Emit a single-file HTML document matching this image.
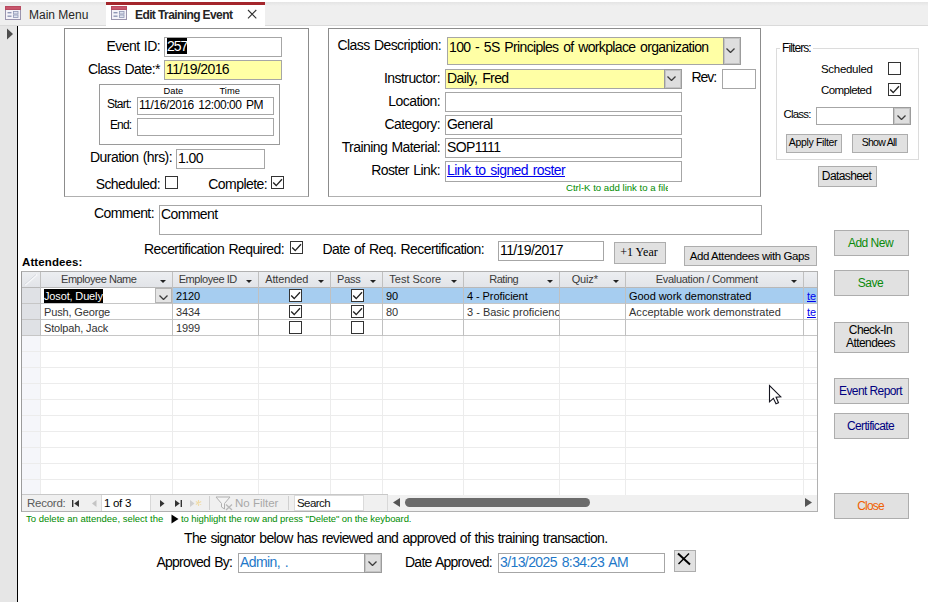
<!DOCTYPE html>
<html><head><meta charset="utf-8"><title>Edit Training Event</title>
<style>
html,body{margin:0;padding:0;}
body{width:928px;height:602px;position:relative;overflow:hidden;background:#fff;font-family:"Liberation Sans",Arial,sans-serif;font-size:13px;color:#000;}
div,span,a{box-sizing:border-box;}
.a{position:absolute;white-space:nowrap;}
.lbl{position:absolute;white-space:nowrap;text-align:right;font-size:14px;letter-spacing:-0.57px;word-spacing:1px;line-height:16px;height:16px;}
.inp{position:absolute;border:1px solid #a6a6a6;background:#fff;font-size:14px;letter-spacing:-0.6px;word-spacing:1.5px;line-height:17px;padding-left:1px;white-space:nowrap;overflow:hidden;}
.y{background:#ffffa5;}
.box{position:absolute;border:1px solid #8c8c8c;}
.btn{position:absolute;background:#e1e1e1;border:1px solid #adadad;text-align:center;white-space:nowrap;padding-right:2px;}
.cb{position:absolute;width:13px;height:13px;border:1px solid #333;background:#fff;}
.cb svg{position:absolute;left:0;top:0;}
.dd{position:absolute;background:#e1e1e1;border:1px solid #adadad;}
.dd svg{position:absolute;left:50%;top:50%;margin:-2px 0 0 -4px;}
.dd.k svg{margin:-3px 0 0 -6px;}
.dd.f svg{margin:-1px 0 0 -5px;}
.dd.h svg{margin:-2px 0 0 -5.5px;}
.hd{font-size:11px;letter-spacing:-0.45px;line-height:15px;height:15px;text-align:center;color:#3a3a3a;}
.ct{font-size:11px;letter-spacing:-0.15px;line-height:14px;}
.lk{color:#0000ee;text-decoration:underline;}
.nv{font-size:11.5px;line-height:14px;}
.cb.g{width:13px;height:13px;}
</style></head><body>

<!-- tab bar -->
<div class="a" id="tabbar" style="left:0;top:2px;width:928px;height:24px;background:linear-gradient(#e4e4e4,#efefef 4px,#efefef);border-bottom:1px solid #dadada;"></div>
<div class="a" id="tab2" style="left:106px;top:2px;width:159px;height:24px;background:#fff;border-top:3px solid #a4262c;"></div>
<svg class="a" style="left:5px;top:6px" width="17" height="15" viewBox="0 0 17 15"><rect x="0.5" y="0.5" width="15" height="13" fill="#f4f2f8" stroke="#9a94ad"/><rect x="0.5" y="0.5" width="15" height="3" fill="#c8566c" stroke="#b84a60"/><rect x="2.5" y="6" width="4" height="1.4" fill="#8f97b5"/><rect x="2.5" y="9.5" width="4" height="1.4" fill="#8f97b5"/><rect x="8.5" y="5.5" width="4.5" height="2.5" fill="#dfe3ee" stroke="#8f97b5" stroke-width=".8"/><rect x="8.5" y="9" width="4.5" height="2.5" fill="#dfe3ee" stroke="#8f97b5" stroke-width=".8"/></svg>
<div class="a" style="left:29px;top:6.5px;font-size:12px;line-height:16px;color:#262626;">Main Menu</div>
<svg class="a" style="left:111px;top:6px" width="17" height="15" viewBox="0 0 17 15"><rect x="0.5" y="0.5" width="15" height="13" fill="#f4f2f8" stroke="#9a94ad"/><rect x="0.5" y="0.5" width="15" height="3" fill="#c8566c" stroke="#b84a60"/><rect x="2.5" y="6" width="4" height="1.4" fill="#8f97b5"/><rect x="2.5" y="9.5" width="4" height="1.4" fill="#8f97b5"/><rect x="8.5" y="5.5" width="4.5" height="2.5" fill="#dfe3ee" stroke="#8f97b5" stroke-width=".8"/><rect x="8.5" y="9" width="4.5" height="2.5" fill="#dfe3ee" stroke="#8f97b5" stroke-width=".8"/></svg>
<div class="a" style="left:135px;top:6.5px;font-size:12px;line-height:16px;font-weight:bold;letter-spacing:-0.6px;color:#262626;">Edit Training Event</div>
<svg class="a" style="left:246px;top:8px" width="12" height="12" viewBox="0 0 12 12"><path d="M2 2 L10.3 10.3 M10.3 2 L2 10.3" stroke="#333" stroke-width="1.1" fill="none"/></svg>

<!-- record selector strip -->
<div class="a" style="left:0;top:26px;width:17px;height:576px;background:#e6e6e6;"></div>
<div class="a" style="left:17px;top:26px;width:1px;height:576px;background:#000;"></div>
<svg class="a" style="left:6px;top:28px" width="8" height="12" viewBox="0 0 8 12"><path d="M1 0.5 L7 6 L1 11.5 Z" fill="#4d4d4d"/></svg>

<!-- left panel -->
<div class="box" style="left:64px;top:28px;width:245px;height:169px;border-bottom-color:#b0b0b0;"></div>
<div class="lbl" style="left:70px;width:90px;top:38px;">Event ID:</div>
<div class="inp" style="left:164px;top:37px;width:118px;height:20px;"><span style="background:#000;color:#fff;margin-left:1px;letter-spacing:-1px;">257</span></div>
<div class="lbl" style="left:70px;width:90px;top:61px;">Class Date:*</div>
<div class="inp y" style="left:164px;top:60px;width:118px;height:20px;">11/19/2016</div>
<div class="box" style="left:99px;top:84px;width:181px;height:61px;border-color:#9a9a9a;"></div>
<div class="a" style="left:163.5px;top:86px;font-size:9.33px;line-height:11px;">Date</div>
<div class="a" style="left:219.5px;top:86px;font-size:9.33px;line-height:11px;">Time</div>
<div class="a" style="left:107px;top:97px;font-size:12px;letter-spacing:-0.75px;line-height:14px;">Start:</div>
<div class="inp" style="left:137px;top:97px;width:137px;height:18px;font-size:12px;letter-spacing:-0.43px;line-height:15px;">11/16/2016 12:00:00 PM</div>
<div class="a" style="left:110px;top:118px;font-size:12px;letter-spacing:-0.9px;line-height:14px;">End:</div>
<div class="inp" style="left:137px;top:118px;width:137px;height:18px;"></div>
<div class="lbl" style="left:70px;width:102px;top:149px;">Duration (hrs):</div>
<div class="inp" style="left:176px;top:149px;width:89px;height:20px;">1.00</div>
<div class="lbl" style="left:70px;width:90px;top:176px;">Scheduled:</div>
<div class="cb" style="left:165px;top:176px;"></div>
<div class="lbl" style="left:180px;width:87px;top:176px;">Complete:</div>
<div class="cb" style="left:271px;top:176px;"><svg width="11" height="11" viewBox="0 0 11 11"><path d="M1.2 5.6 L4.2 8.6 L10 2.3" stroke="#222" stroke-width="1.35" fill="none"/></svg></div>

<!-- right panel -->
<div class="box" style="left:328px;top:28px;width:433px;height:169px;border-bottom-color:#b0b0b0;"></div>
<div class="lbl" style="left:330px;width:111px;top:37px;">Class Description:</div>
<div class="inp y" style="left:447px;top:37px;width:277px;height:28px;line-height:18px;letter-spacing:-0.66px;">100 - 5S Principles of workplace organization</div>
<div class="dd k" style="left:723px;top:37px;width:18px;height:28px;border:1px solid #9c9c9c;box-shadow:inset 0 0 0 1px #c4c4c4;background:#dedede;"><svg width="9" height="5" viewBox="0 0 9 5"><path d="M0.5 0.5 L4.5 4.5 L8.5 0.5" stroke="#3c3c3c" stroke-width="1.3" fill="none"/></svg></div>
<div class="lbl" style="left:330px;width:110px;top:70px;">Instructor:</div>
<div class="inp y" style="left:445px;top:69px;width:237px;height:20px;">Daily, Fred</div>
<div class="dd k" style="left:664px;top:69px;width:18px;height:20px;border:1px solid #9c9c9c;box-shadow:inset 0 0 0 1px #c4c4c4;background:#dedede;"><svg width="9" height="5" viewBox="0 0 9 5"><path d="M0.5 0.5 L4.5 4.5 L8.5 0.5" stroke="#3c3c3c" stroke-width="1.3" fill="none"/></svg></div>
<div class="lbl" style="left:680px;width:36px;top:69px;letter-spacing:-1.1px;">Rev:</div>
<div class="inp" style="left:722px;top:69px;width:34px;height:20px;"></div>
<div class="lbl" style="left:330px;width:110px;top:93px;">Location:</div>
<div class="inp" style="left:445px;top:92px;width:237px;height:20px;"></div>
<div class="lbl" style="left:330px;width:110px;top:116px;">Category:</div>
<div class="inp" style="left:445px;top:115px;width:237px;height:20px;">General</div>
<div class="lbl" style="left:330px;width:110px;top:139px;">Training Material:</div>
<div class="inp" style="left:445px;top:138px;width:237px;height:20px;">SOP1111</div>
<div class="lbl" style="left:330px;width:110px;top:162px;">Roster Link:</div>
<div class="inp" style="left:445px;top:161px;width:237px;height:21px;color:#0000ee;"><span style="text-decoration:underline;">Link to signed roster</span></div>
<div class="a" style="left:566px;top:182px;font-size:9.6px;line-height:11px;color:#008c00;width:101.5px;overflow:hidden;">Ctrl-K to add link to a file</div>

<!-- filters -->
<div class="a" style="left:776px;top:48px;width:143px;height:112px;border:1px solid #dcdcdc;"></div>
<div class="a" style="left:780px;top:41px;background:#fff;padding:0 2px;font-size:12px;letter-spacing:-0.9px;line-height:14px;">Filters:</div>
<div class="a" style="left:821px;top:62px;font-size:11.5px;letter-spacing:-0.3px;line-height:14px;">Scheduled</div>
<div class="cb" style="left:888px;top:62px;"></div>
<div class="a" style="left:821px;top:83px;font-size:11.5px;letter-spacing:-0.6px;line-height:14px;">Completed</div>
<div class="cb" style="left:888px;top:83px;"><svg width="11" height="11" viewBox="0 0 11 11"><path d="M1.2 5.6 L4.2 8.6 L10 2.3" stroke="#222" stroke-width="1.35" fill="none"/></svg></div>
<div class="a" style="left:783.5px;top:107px;font-size:11.5px;letter-spacing:-0.8px;line-height:14px;">Class:</div>
<div class="inp" style="left:816px;top:107px;width:95px;height:18px;"></div>
<div class="dd f" style="left:893px;top:107px;width:18px;height:18px;border:1px solid #9c9c9c;box-shadow:inset 0 0 0 1px #c4c4c4;background:#dedede;"><svg width="9" height="5" viewBox="0 0 9 5"><path d="M0.5 0.5 L4.5 4.5 L8.5 0.5" stroke="#3c3c3c" stroke-width="1.3" fill="none"/></svg></div>
<div class="btn" style="left:786px;top:134px;width:56px;height:19px;font-size:10.5px;letter-spacing:-0.35px;line-height:15px;">Apply Filter</div>
<div class="btn" style="left:852px;top:134px;width:56px;height:19px;font-size:10.5px;letter-spacing:-0.7px;line-height:15px;">Show All</div>
<div class="btn" style="left:818px;top:166px;width:59px;height:21px;font-size:12px;letter-spacing:-0.6px;line-height:19px;">Datasheet</div>

<!-- comment -->
<div class="lbl" style="left:64px;width:90px;top:205px;">Comment:</div>
<div class="inp" style="left:159px;top:205px;width:603px;height:30px;">Comment</div>

<!-- recert -->
<div class="lbl" style="left:120px;width:164px;top:241px;">Recertification Required:</div>
<div class="cb" style="left:290px;top:241px;"><svg width="11" height="11" viewBox="0 0 11 11"><path d="M1.2 5.6 L4.2 8.6 L10 2.3" stroke="#222" stroke-width="1.35" fill="none"/></svg></div>
<div class="lbl" style="left:316px;width:168px;top:241px;">Date of Req. Recertification:</div>
<div class="inp" style="left:498px;top:241px;width:106px;height:20px;">11/19/2017</div>
<div class="btn" style="left:614px;top:242px;width:52px;height:22px;font-family:'Liberation Serif',serif;font-size:12px;line-height:19px;">+1 Year</div>
<div class="btn" style="left:684px;top:246px;width:133px;height:20px;font-size:11.5px;letter-spacing:-0.42px;line-height:18px;">Add Attendees with Gaps</div>
<div class="a" style="left:22px;top:255px;font-size:11.5px;letter-spacing:0.1px;line-height:14px;font-weight:bold;">Attendees:</div>

<!-- datasheet -->
<div class="a" style="left:21px;top:271px;width:797px;height:241px;border:1px solid #b1b1b1;border-left-color:#9c9c9c;background:#fff;"></div>
<div class="a" style="left:22px;top:272px;width:795px;height:15px;background:linear-gradient(#eceef1,#e2e4e8);"></div>
<div class="a" style="left:22px;top:287px;width:795px;height:1px;background:#b8b8b8;"></div>
<div class="a" style="left:22px;top:288px;width:18px;height:48px;background:#dfe1e5;"></div>
<div class="a" style="left:22px;top:336px;width:18px;height:159px;background:#f5f6fa;"></div>
<div class="a" style="left:22px;top:303px;width:795px;height:1px;background:#c6c6c6;"></div>
<div class="a" style="left:22px;top:319px;width:795px;height:1px;background:#c6c6c6;"></div>
<div class="a" style="left:22px;top:335px;width:795px;height:1px;background:#c6c6c6;"></div>
<div class="a" style="left:22px;top:351px;width:795px;height:1px;background:#ececec;"></div>
<div class="a" style="left:22px;top:367px;width:795px;height:1px;background:#ececec;"></div>
<div class="a" style="left:22px;top:383px;width:795px;height:1px;background:#ececec;"></div>
<div class="a" style="left:22px;top:399px;width:795px;height:1px;background:#ececec;"></div>
<div class="a" style="left:22px;top:415px;width:795px;height:1px;background:#ececec;"></div>
<div class="a" style="left:22px;top:431px;width:795px;height:1px;background:#ececec;"></div>
<div class="a" style="left:22px;top:447px;width:795px;height:1px;background:#ececec;"></div>
<div class="a" style="left:22px;top:463px;width:795px;height:1px;background:#ececec;"></div>
<div class="a" style="left:22px;top:479px;width:795px;height:1px;background:#ececec;"></div>
<div class="a" style="left:172px;top:288px;width:645px;height:15px;background:#a6cdf0;"></div>
<div class="a" style="left:40px;top:272px;width:1px;height:64px;background:#c0c0c0;"></div>
<div class="a" style="left:40px;top:336px;width:1px;height:159px;background:#ececec;"></div>
<div class="a" style="left:172px;top:272px;width:1px;height:64px;background:#c0c0c0;"></div>
<div class="a" style="left:172px;top:336px;width:1px;height:159px;background:#ececec;"></div>
<div class="a" style="left:258px;top:272px;width:1px;height:64px;background:#c0c0c0;"></div>
<div class="a" style="left:258px;top:336px;width:1px;height:159px;background:#ececec;"></div>
<div class="a" style="left:330px;top:272px;width:1px;height:64px;background:#c0c0c0;"></div>
<div class="a" style="left:330px;top:336px;width:1px;height:159px;background:#ececec;"></div>
<div class="a" style="left:382px;top:272px;width:1px;height:64px;background:#c0c0c0;"></div>
<div class="a" style="left:382px;top:336px;width:1px;height:159px;background:#ececec;"></div>
<div class="a" style="left:463px;top:272px;width:1px;height:64px;background:#c0c0c0;"></div>
<div class="a" style="left:463px;top:336px;width:1px;height:159px;background:#ececec;"></div>
<div class="a" style="left:559px;top:272px;width:1px;height:64px;background:#c0c0c0;"></div>
<div class="a" style="left:559px;top:336px;width:1px;height:159px;background:#ececec;"></div>
<div class="a" style="left:625px;top:272px;width:1px;height:64px;background:#c0c0c0;"></div>
<div class="a" style="left:625px;top:336px;width:1px;height:159px;background:#ececec;"></div>
<div class="a" style="left:803px;top:272px;width:1px;height:64px;background:#c0c0c0;"></div>
<div class="a" style="left:803px;top:336px;width:1px;height:159px;background:#ececec;"></div>
<div class="a hd" style="left:40px;top:272px;width:117.5px;letter-spacing:-0.45px;">Employee Name</div>
<svg class="a" style="left:160px;top:280px" width="6" height="3" viewBox="0 0 6 3"><path d="M0 0 H6 L3 3 Z" fill="#222"/></svg>
<div class="a hd" style="left:172px;top:272px;width:71.5px;letter-spacing:-0.45px;">Employee ID</div>
<svg class="a" style="left:246px;top:280px" width="6" height="3" viewBox="0 0 6 3"><path d="M0 0 H6 L3 3 Z" fill="#222"/></svg>
<div class="a hd" style="left:258px;top:272px;width:57.5px;letter-spacing:-0.12px;">Attended</div>
<svg class="a" style="left:318px;top:280px" width="6" height="3" viewBox="0 0 6 3"><path d="M0 0 H6 L3 3 Z" fill="#222"/></svg>
<div class="a hd" style="left:330px;top:272px;width:37.5px;letter-spacing:-0.3px;">Pass</div>
<svg class="a" style="left:370px;top:280px" width="6" height="3" viewBox="0 0 6 3"><path d="M0 0 H6 L3 3 Z" fill="#222"/></svg>
<div class="a hd" style="left:382px;top:272px;width:66.5px;letter-spacing:0px;">Test Score</div>
<svg class="a" style="left:451px;top:280px" width="6" height="3" viewBox="0 0 6 3"><path d="M0 0 H6 L3 3 Z" fill="#222"/></svg>
<div class="a hd" style="left:463px;top:272px;width:81.5px;letter-spacing:-0.45px;">Rating</div>
<svg class="a" style="left:547px;top:280px" width="6" height="3" viewBox="0 0 6 3"><path d="M0 0 H6 L3 3 Z" fill="#222"/></svg>
<div class="a hd" style="left:559px;top:272px;width:51.5px;letter-spacing:-0.17px;">Quiz*</div>
<svg class="a" style="left:613px;top:280px" width="6" height="3" viewBox="0 0 6 3"><path d="M0 0 H6 L3 3 Z" fill="#222"/></svg>
<div class="a hd" style="left:625px;top:272px;width:163.5px;letter-spacing:-0.32px;">Evaluation / Comment</div>
<svg class="a" style="left:791px;top:280px" width="6" height="3" viewBox="0 0 6 3"><path d="M0 0 H6 L3 3 Z" fill="#222"/></svg>

<!-- select-all corner -->
<svg class="a" style="left:24px;top:274px" width="14" height="12" viewBox="0 0 14 12"><path d="M1 11 L13 0.5" stroke="#f6f7f9" stroke-width="2"/><path d="M0.5 10.5 L12 0.5" stroke="#d3d6dc" stroke-width="1"/></svg>
<!-- row 1 -->
<div class="a" style="left:41px;top:288px;width:131px;height:15px;background:#fff;"></div>
<div class="a ct" style="left:44px;top:289px;background:#000;color:#fff;height:14px;">Josot, Duely</div>
<div class="a" style="left:155px;top:288px;width:17px;height:15px;background:#e4e4e4;border:1px solid #b4b4b4;"><svg class="a" style="left:3px;top:6px" width="9" height="5" viewBox="0 0 9 5"><path d="M0.5 0.5 L4.5 4.5 L8.5 0.5" stroke="#3c3c3c" stroke-width="1.3" fill="none"/></svg></div>
<div class="a ct" style="left:176px;top:289px;">2120</div>
<div class="cb g" style="left:289px;top:289px;"><svg width="11" height="11" viewBox="0 0 11 11"><path d="M1.2 5.6 L4.2 8.6 L10 2.3" stroke="#222" stroke-width="1.35" fill="none"/></svg></div>
<div class="cb g" style="left:351px;top:289px;"><svg width="11" height="11" viewBox="0 0 11 11"><path d="M1.2 5.6 L4.2 8.6 L10 2.3" stroke="#222" stroke-width="1.35" fill="none"/></svg></div>
<div class="a ct" style="left:386px;top:289px;">90</div>
<div class="a ct" style="left:467px;top:289px;letter-spacing:-0.08px;">4 - Proficient</div>
<div class="a ct" style="left:629px;top:289px;letter-spacing:-0.05px;">Good work demonstrated</div>
<div class="a ct lk" style="left:807px;top:289px;width:10px;overflow:hidden;">te</div>
<!-- row 2 -->
<div class="a ct" style="color:#333;left:44px;top:305px;">Push, George</div>
<div class="a ct" style="color:#333;left:176px;top:305px;">3434</div>
<div class="cb g" style="left:289px;top:305px;"><svg width="11" height="11" viewBox="0 0 11 11"><path d="M1.2 5.6 L4.2 8.6 L10 2.3" stroke="#222" stroke-width="1.35" fill="none"/></svg></div>
<div class="cb g" style="left:351px;top:305px;"><svg width="11" height="11" viewBox="0 0 11 11"><path d="M1.2 5.6 L4.2 8.6 L10 2.3" stroke="#222" stroke-width="1.35" fill="none"/></svg></div>
<div class="a ct" style="color:#333;left:386px;top:305px;">80</div>
<div class="a ct" style="color:#333;left:467px;top:305px;width:92px;overflow:hidden;letter-spacing:0;">3 - Basic proficiency</div>
<div class="a ct" style="color:#333;left:629px;top:305px;letter-spacing:0.03px;">Acceptable work demonstrated</div>
<div class="a ct lk" style="left:807px;top:305px;width:10px;overflow:hidden;">te</div>
<!-- row 3 -->
<div class="a ct" style="color:#333;left:44px;top:321px;">Stolpah, Jack</div>
<div class="a ct" style="color:#333;left:176px;top:321px;">1999</div>
<div class="cb g" style="left:289px;top:321px;"></div>
<div class="cb g" style="left:351px;top:321px;"></div>
<!-- nav bar -->
<div class="a" style="left:22px;top:495px;width:795px;height:16px;background:#f0f0f0;"></div>
<div class="a" style="left:22px;top:494px;width:366px;height:1px;background:#c8c8c8;"></div>
<div class="a nv" style="left:27px;top:496px;color:#5a5a5a;letter-spacing:-0.25px;">Record:</div>
<svg class="a" style="left:72px;top:500px" width="7" height="7" viewBox="0 0 7 7"><rect x="0" y="0" width="1.4" height="7" fill="#333"/><path d="M7 0 V7 L2.2 3.5 Z" fill="#333"/></svg>
<svg class="a" style="left:92px;top:500px" width="5" height="7" viewBox="0 0 5 7"><path d="M4.5 0 V7 L0 3.5 Z" fill="#c4c4c4"/></svg>
<div class="a" style="left:101px;top:495px;width:50px;height:16px;background:#fff;border-left:1px solid #d8d8d8;border-right:1px solid #d8d8d8;"></div>
<div class="a nv" style="left:104px;top:496px;color:#000;letter-spacing:-0.3px;">1 of 3</div>
<svg class="a" style="left:160px;top:500px" width="5" height="7" viewBox="0 0 5 7"><path d="M0 0 V7 L4.5 3.5 Z" fill="#333"/></svg>
<svg class="a" style="left:175px;top:500px" width="7" height="7" viewBox="0 0 7 7"><path d="M0 0 V7 L4.8 3.5 Z" fill="#333"/><rect x="5.6" y="0" width="1.4" height="7" fill="#333"/></svg>
<svg class="a" style="left:190px;top:499px" width="12" height="9" viewBox="0 0 12 9"><path d="M0 1 V8 L4.5 4.5 Z" fill="#cfcfcf"/><path d="M8.5 1 V7 M5.8 2.5 L11.2 5.5 M11.2 2.5 L5.8 5.5" stroke="#f0dca8" stroke-width="1.1"/></svg>
<div class="a" style="left:209px;top:496px;width:1px;height:14px;background:#d0d0d0;"></div>
<svg class="a" style="left:215px;top:496px" width="19" height="15" viewBox="0 0 19 15"><path d="M1 1 H15 L9.5 7.5 V13 L6.5 11 V7.5 Z" fill="#f4f4f4" stroke="#b0b0b0" stroke-width="1"/><path d="M11 8.5 L17 14 M17 8.5 L11 14" stroke="#b8b8b8" stroke-width="1.3"/></svg>
<div class="a nv" style="left:235px;top:496px;color:#a8a8a8;">No Filter</div>
<div class="a" style="left:288px;top:496px;width:1px;height:14px;background:#d0d0d0;"></div>
<div class="a" style="left:294px;top:495px;width:70px;height:16px;background:#fff;border:1px solid #dadada;"></div>
<div class="a nv" style="left:297px;top:496px;color:#111;letter-spacing:-0.55px;">Search</div>
<div class="a" style="left:387px;top:495px;width:1px;height:16px;background:#d8d8d8;"></div>
<svg class="a" style="left:393px;top:498px" width="7" height="9" viewBox="0 0 7 9"><path d="M7 0 V9 L0 4.5 Z" fill="#555"/></svg>
<div class="a" style="left:405px;top:498px;width:185px;height:9px;border-radius:4.5px;background:#6b6b6b;"></div>
<svg class="a" style="left:805px;top:498px" width="7" height="9" viewBox="0 0 7 9"><path d="M0 0 V9 L7 4.5 Z" fill="#555"/></svg>


<!-- right buttons -->
<div class="btn" style="left:834px;top:230px;width:75px;height:26px;font-size:12px;letter-spacing:-0.5px;line-height:24px;color:#0a8a0a;">Add New</div>
<div class="btn" style="left:834px;top:270px;width:75px;height:26px;font-size:12px;letter-spacing:-0.5px;line-height:24px;color:#0a8a0a;">Save</div>
<div class="btn" style="left:834px;top:322px;width:75px;height:31px;font-size:12px;letter-spacing:-0.58px;line-height:13px;padding-top:1px;white-space:normal;">Check-In Attendees</div>
<div class="btn" style="left:834px;top:378px;width:75px;height:26px;font-size:12px;letter-spacing:-0.58px;line-height:24px;color:#000080;">Event Report</div>
<div class="btn" style="left:834px;top:413px;width:75px;height:26px;font-size:12px;letter-spacing:-0.64px;line-height:24px;color:#000080;">Certificate</div>
<div class="btn" style="left:834px;top:493px;width:75px;height:26px;font-size:12px;letter-spacing:-0.85px;line-height:24px;color:#f06000;">Close</div>

<!-- bottom -->
<div class="a" style="left:26px;top:513px;font-size:9.5px;line-height:12px;color:#008c00;">To delete an attendee, select the</div>
<div class="a" style="left:181px;top:513px;font-size:9.5px;line-height:12px;letter-spacing:-0.07px;color:#008c00;">to highlight the row and press "Delete" on the keyboard.</div>
<svg class="a" style="left:171px;top:514px" width="8" height="10" viewBox="0 0 8 10"><path d="M0.5 0.5 L7.5 5 L0.5 9.5 Z" fill="#000"/></svg>
<div class="a" style="left:184px;top:530px;font-size:14px;letter-spacing:-0.65px;word-spacing:1px;line-height:16px;">The signator below has reviewed and approved of this training transaction.</div>
<div class="lbl" style="left:140px;width:92px;top:554px;letter-spacing:-0.8px;">Approved By:</div>
<div class="inp" style="left:238px;top:553px;width:144px;height:20px;color:#1e78c8;">Admin, .</div>
<div class="dd h" style="left:364px;top:553px;width:18px;height:20px;border:1px solid #9c9c9c;box-shadow:inset 0 0 0 1px #c4c4c4;background:#dedede;"><svg width="9" height="5" viewBox="0 0 9 5"><path d="M0.5 0.5 L4.5 4.5 L8.5 0.5" stroke="#3c3c3c" stroke-width="1.3" fill="none"/></svg></div>
<div class="lbl" style="left:400px;width:92px;top:554px;letter-spacing:-0.75px;">Date Approved:</div>
<div class="inp" style="left:498px;top:553px;width:167px;height:20px;color:#1e78c8;">3/13/2025 8:34:23 AM</div>
<div class="btn" style="left:674px;top:550px;width:22px;height:22px;"><svg style="position:absolute;left:2px;top:1px" width="14" height="14" viewBox="0 0 14 14"><path d="M1 1.5 L13 12.5" stroke="#000" stroke-width="2" fill="none"/><path d="M12 1.5 L1.5 12" stroke="#000" stroke-width="1.4" fill="none"/></svg></div>

<!-- cursor -->
<svg class="a" style="left:768px;top:384px" width="14" height="21" viewBox="0 0 14 21"><path d="M1.5 1.5 L1.5 17.8 L5.4 14.3 L8 19.8 L10.5 18.7 L8.1 13.3 L12.9 12.9 Z" fill="#fff" stroke="#14141e" stroke-width="1.1" stroke-linejoin="miter"/></svg>
</body></html>
